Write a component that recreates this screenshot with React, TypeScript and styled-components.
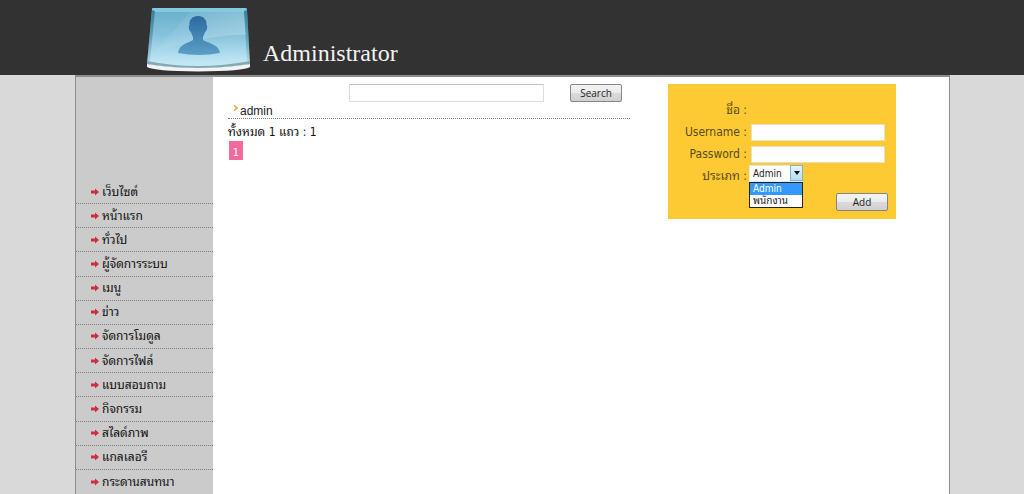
import React from "react";
import styled, { createGlobalStyle } from "styled-components";

const sans = `"DejaVu Sans Condensed", "Noto Sans Thai Looped", "Loma", "Waree", "Noto Sans Thai", "Tahoma", sans-serif`;
const ui = `"Open Sans", "Noto Sans Thai Looped", "Loma", "Waree", "Noto Sans Thai", "Tahoma", sans-serif`;

const GlobalStyle = createGlobalStyle`
  *, *::before, *::after { box-sizing: border-box; }
  body {
    margin: 0;
    background: #d9d9d9;
    color: #222;
    font: 12px/16px ${sans};
  }
`;

const Page = styled.div`
  display: flex;
  flex-direction: column;
  min-height: 100vh;
`;

const Header = styled.header`
  display: flex;
  align-items: flex-start;
  height: 75px;
  padding: 7px 16px 0 146px;
  gap: 12px;
  background: #323232;
`;

const Title = styled.h1`
  margin: 32px 0 0;
  color: #f2f2f2;
  font: 400 24px/28px "Liberation Serif", serif;
`;

const Frame = styled.div`
  display: flex;
  flex: 1;
  margin: 0 74px 0 75px;
  border: 1px solid #8c8c8c;
  border-top-width: 2px;
  border-bottom: 0;
  background: #fff;
`;

const Sidebar = styled.nav`
  flex: 0 0 137px;
  padding-top: 103px;
  background: #cbcbcb;
`;

const Menu = styled.ul`
  display: grid;
  grid-auto-rows: 1fr;
  min-height: 314px;
  margin: 0;
  padding: 0;
  list-style: none;
`;

const MenuItem = styled.li`
  display: flex;
  border-bottom: 1px dotted #808080;
  &:last-child { border-bottom: 0; }
`;

const MenuLink = styled.a`
  display: flex;
  align-items: center;
  gap: 3px;
  padding-left: 15px;
  color: #111;
  white-space: nowrap;
  text-decoration: none;
`;

const Content = styled.main`
  display: flex;
  flex: 1;
  align-items: flex-start;
  justify-content: space-between;
  gap: 38px;
  padding: 7px 53px 0 15px;
`;

const Listing = styled.section`
  flex: 1;
  min-width: 0;
`;

const SearchForm = styled.form`
  display: flex;
  justify-content: flex-end;
  gap: 26px;
  padding-right: 8px;
`;

const SearchInput = styled.input`
  width: 195px;
  height: 18px;
  padding: 0 4px;
  border: 1px solid #dedede;
  border-top-color: #c0c0c0;
  background: #fff;
  font: 12px/16px ${sans};
`;

const Button = styled.button`
  width: 52px;
  height: 18px;
  padding: 0;
  border: 1px solid #858585;
  border-radius: 2px;
  background: linear-gradient(#f4f4f4 0%, #ebebeb 48%, #dadada 52%, #d0d0d0 100%);
  color: #222;
  font: 10px/14px ${ui};
`;

const Entry = styled.div`
  display: flex;
  align-items: center;
  gap: 2px;
  height: 17px;
  padding: 1px 0 0 5px;
  border-bottom: 1px dotted #808080;
  font: 12px/16px "Liberation Sans", sans-serif;
`;

const Summary = styled.p`
  margin: 5px 0 0;
  color: #111;
`;

const PageLink = styled.a`
  display: flex;
  align-items: flex-end;
  justify-content: center;
  width: 14px;
  height: 19px;
  margin: 1px 0 0 1px;
  background: #f26a9c;
  color: #fff;
  font-size: 11px;
  line-height: 15px;
  text-decoration: none;
`;

const Panel = styled.form`
  display: flex;
  flex: 0 0 228px;
  flex-direction: column;
  padding: 15px 8px 8px;
  background: #fdca33;
`;

const Field = styled.div`
  display: grid;
  grid-template-columns: 71px 1fr;
  align-items: center;
  column-gap: 4px;
  height: 22px;
`;

const Label = styled.label`
  color: #5c4a16;
  text-align: right;
  white-space: nowrap;
`;

const TextInput = styled.input`
  width: 134px;
  height: 17px;
  padding: 0 4px;
  border: 1px solid #e8dfc0;
  background: #fff;
  font: 12px/15px ${sans};
`;

const SelectBox = styled.div`
  position: relative;
  width: 54px;
  height: 17px;
  margin: -5px 0 0 -2px;
`;

const Select = styled.select`
  display: block;
  width: 100%;
  height: 100%;
  padding: 0 0 0 3px;
  border: 1px solid #e8e8e8;
  border-radius: 0;
  background: #fff;
  color: #222;
  font: 10px/14px ${sans};
  appearance: none;
`;

const SelectArrow = styled.span`
  position: absolute;
  top: 0;
  right: 0;
  display: grid;
  place-items: center;
  width: 13px;
  height: 16px;
  border: 1px solid #7fb4cc;
  background: linear-gradient(#e6f5fc, #b4dcf0);
  pointer-events: none;
`;

const Options = styled.ul`
  position: absolute;
  top: 100%;
  left: 0;
  z-index: 1;
  width: 100%;
  margin: 0;
  padding: 0;
  border: 1px solid #222;
  background: #fff;
  list-style: none;
`;

const Option = styled.li<{ $selected?: boolean }>`
  height: 12px;
  padding-left: 3px;
  background: ${(p) => (p.$selected ? "#3399ff" : "#fff")};
  color: ${(p) => (p.$selected ? "#fff" : "#222")};
  font-size: 10px;
  line-height: 12px;
  white-space: nowrap;
`;

const Actions = styled.div`
  display: flex;
  justify-content: flex-end;
  padding-top: 6px;
`;

const UserBadge = () => (
  <svg width="105" height="65" viewBox="0 0 105 65" aria-hidden="true">
    <defs>
      <linearGradient id="glass" x1="0" y1="0" x2="0" y2="1">
        <stop offset="0" stopColor="#66adca" />
        <stop offset="0.45" stopColor="#86c3db" />
        <stop offset="0.8" stopColor="#b4dff0" />
        <stop offset="1" stopColor="#cdebf7" />
      </linearGradient>
      <linearGradient id="shine" x1="0" y1="0" x2="1" y2="0.3">
        <stop offset="0" stopColor="#fff" stopOpacity="0" />
        <stop offset="1" stopColor="#fff" stopOpacity="0.22" />
      </linearGradient>
      <linearGradient id="person" x1="0" y1="0" x2="0" y2="1">
        <stop offset="0" stopColor="#2b69a0" />
        <stop offset="1" stopColor="#5c9fc5" />
      </linearGradient>
      <linearGradient id="side" x1="0" y1="0" x2="0" y2="1">
        <stop offset="0" stopColor="#2a6f8c" stopOpacity="0.75" />
        <stop offset="1" stopColor="#2a6f8c" stopOpacity="0.1" />
      </linearGradient>
    </defs>
    <path d="M6 2 Q6 1 8 1 H99 Q101 1 101 3 L104 57 Q52 65 1 57 Z" fill="url(#glass)" />
    <path d="M44 5 H98 L101 28 Q72 26 10 44 Z" fill="url(#shine)" />
    <path d="M6 2 Q6 1 8 1 H99 Q101 1 101 3 V5 H6 Z" fill="#83c9e0" />
    <path d="M9 4 L4 54 L1 56 L6 3 Z M98 4 L101 54 L104 56 L101 3 Z" fill="url(#side)" />
    <path d="M1 54 Q26 59 52 59 Q78 59 104 54 V57 Q78 61 52 61 Q26 61 1 57 Z" fill="#86a9b6" />
    <path d="M1 57 Q26 61 52 61 Q78 61 104 57 V60 Q98 64 52 64.500 Q8 64 1 60 Z" fill="#f1f3f4" />
    <path
      d="M52 9 C46 9 43 13 43.500 18 C42 19 43 24 45 25 Q46 28 47 30 V33 C43 36 33 37 32 46 Q53 50 74 46 C73 37 61 36 57 33 V30 Q58 28 59 25 C61 24 62 19 60.500 18 C61 13 58 9 52 9 Z"
      fill="url(#person)"
    />
  </svg>
);

const RedArrow = () => (
  <svg width="8" height="8" viewBox="0 0 8 8" aria-hidden="true">
    <path d="M0 2.500 H4 V0.500 L8 4 L4 7.500 V5.500 H0 Z" fill="#cf2d40" />
  </svg>
);

const Bullet = () => (
  <svg width="5" height="11" viewBox="0 0 5 11" aria-hidden="true">
    <path d="M1 0.500 L4 3 L1 5.500" fill="none" stroke="#e2a33c" strokeWidth="1.500" />
  </svg>
);

const menu = [
  "เว็บไซต์", "หน้าแรก", "ทั่วไป", "ผู้จัดการระบบ", "เมนู", "ข่าว", "จัดการโมดูล",
  "จัดการไฟล์", "แบบสอบถาม", "กิจกรรม", "สไลด์ภาพ", "แกลเลอรี", "กระดานสนทนา",
];

export default function App() {
  return (
    <Page lang="th">
      <GlobalStyle />
      <Header>
        <UserBadge />
        <Title>Administrator</Title>
      </Header>
      <Frame>
        <Sidebar>
          <Menu>
            {menu.map((name) => (
              <MenuItem key={name}>
                <MenuLink href="#"><RedArrow />{name}</MenuLink>
              </MenuItem>
            ))}
          </Menu>
        </Sidebar>
        <Content>
          <Listing>
            <SearchForm onSubmit={(e) => e.preventDefault()}>
              <SearchInput type="text" aria-label="Search" />
              <Button type="submit">Search</Button>
            </SearchForm>
            <Entry><Bullet />admin</Entry>
            <Summary>ทั้งหมด 1 แถว : 1</Summary>
            <PageLink href="#">1</PageLink>
          </Listing>
          <Panel onSubmit={(e) => e.preventDefault()}>
            <Field><Label as="span">ชื่อ :</Label></Field>
            <Field>
              <Label htmlFor="username">Username :</Label>
              <TextInput id="username" type="text" />
            </Field>
            <Field>
              <Label htmlFor="password">Password :</Label>
              <TextInput id="password" type="password" />
            </Field>
            <Field>
              <Label htmlFor="kind">ประเภท :</Label>
              <SelectBox>
                <Select id="kind" defaultValue="Admin">
                  <option>Admin</option>
                  <option>พนักงาน</option>
                </Select>
                <SelectArrow>
                  <svg width="6" height="4" viewBox="0 0 6 4" aria-hidden="true">
                    <path d="M0 0 H6 L3 4 Z" fill="#111" />
                  </svg>
                </SelectArrow>
                <Options>
                  <Option $selected>Admin</Option>
                  <Option>พนักงาน</Option>
                </Options>
              </SelectBox>
            </Field>
            <Actions><Button type="submit">Add</Button></Actions>
          </Panel>
        </Content>
      </Frame>
    </Page>
  );
}
